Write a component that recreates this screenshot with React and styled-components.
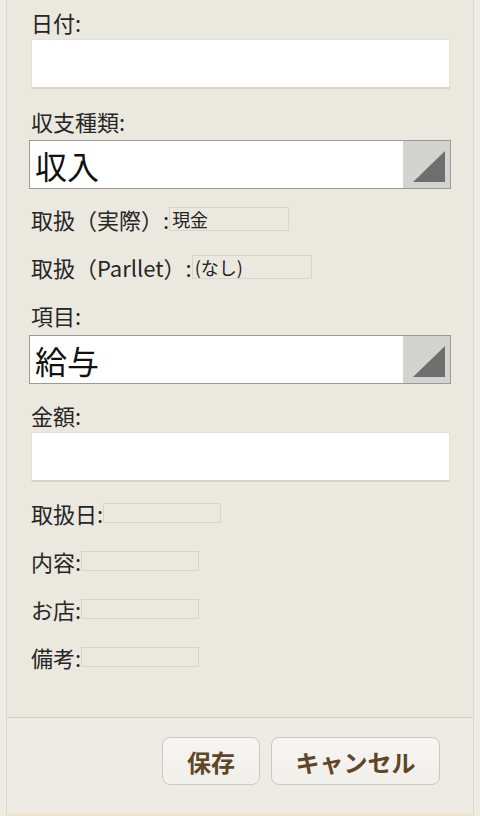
import styled, { createGlobalStyle } from "styled-components";

const Global = createGlobalStyle`
  html, body {
    margin: 0;
    padding: 0;
    background: #eeece5;
  }
  body {
    font-family: "Noto Sans CJK JP", "Noto Sans", sans-serif;
    color: #262626;
  }
`;

const Page = styled.div`
  width: 480px;
  height: 816px;
  display: flex;
  padding: 0 6px;
  box-sizing: border-box;
`;

const Frame = styled.div`
  flex: 1;
  display: flex;
  flex-direction: column;
  background: #ebe8df;
  border-left: 1px solid #dcd9d0;
  border-right: 1px solid #dcd9d0;
  border-bottom: 3px solid #efe5c9;
`;

const Form = styled.div`
  flex: 1;
  padding: 9px 24px 0 24px;
  display: flex;
  flex-direction: column;
`;

const Label = styled.div`
  font-size: 22px;
  line-height: 26px;
  height: 26px;
  margin-top: ${(p) => p.$top || 0}px;
`;

const TextBox = styled.div`
  height: 50px;
  margin-top: ${(p) => p.$top || 0}px;
  margin-right: -1px;
  background: #fff;
  box-sizing: border-box;
  border: 1px solid #e4e1d8;
  border-bottom: 2px solid #d6d3ca;
`;

const Select = styled.div`
  height: 49px;
  margin-top: ${(p) => p.$top || 0}px;
  margin-left: -2px;
  margin-right: -2px;
  display: flex;
  box-sizing: border-box;
  border: 1px solid #9b9a93;
  background: #fff;
`;

const SelectText = styled.div`
  flex: 1;
  display: flex;
  align-items: center;
  padding-left: 5px;
  font-size: 32px;
  color: #111;
`;

const Arrow = styled.div`
  width: 47px;
  background: #d3d3d1;
  display: flex;
  align-items: flex-end;
  justify-content: flex-end;
  padding: 0 5px 6px 0;
  box-sizing: border-box;
`;

const Row = styled.div`
  display: flex;
  align-items: center;
  height: 26px;
  margin-top: ${(p) => p.$top || 0}px;
  font-size: 22px;
`;

const Field = styled.div`
  width: ${(p) => p.$w}px;
  height: ${(p) => p.$h}px;
  box-sizing: border-box;
  border: 1px solid #d8d5cc;
  background: #ebe8e0;
  font-size: 18px;
  line-height: ${(p) => p.$h - 2}px;
  padding-left: 2px;
  color: #222;
`;

const Footer = styled.div`
  height: 96px;
  border-top: 1px solid #d3d0c7;
  background: #edebe3;
  display: flex;
  justify-content: flex-end;
  align-items: flex-start;
  gap: 11px;
  padding: 19px 33px 0 0;
  box-sizing: border-box;
`;

const Button = styled.button`
  width: ${(p) => p.$w}px;
  height: 48px;
  border: 1px solid #ccc9c0;
  border-radius: 8px;
  background: linear-gradient(#f6f5f2, #f0efea);
  font-family: "Noto Sans CJK JP", sans-serif;
  font-weight: 700;
  font-size: 24px;
  color: #5e4626;
  padding: 0;
  cursor: pointer;
`;

const Triangle = () => (
  <svg width="32" height="31" viewBox="0 0 32 31">
    <polygon points="0,31 32,31 32,0" fill="#6e6e6e" />
  </svg>
);

const App = () => {
  return (
    <Page>
      <Global />
      <Frame>
        <Form>
          <Label>日付:</Label>
          <TextBox $top={4} />
          <Label $top={19}>収支種類:</Label>
          <Select $top={6}>
            <SelectText>収入</SelectText>
            <Arrow>
              <Triangle />
            </Arrow>
          </Select>
          <Row $top={17}>
            取扱（実際）:<Field $w={120} $h={24}>現金</Field>
          </Row>
          <Row $top={22}>
            取扱（Parllet）:<Field $w={120} $h={24}>(なし)</Field>
          </Row>
          <Label $top={22}>項目:</Label>
          <Select $top={7}>
            <SelectText>給与</SelectText>
            <Arrow>
              <Triangle />
            </Arrow>
          </Select>
          <Label $top={18}>金額:</Label>
          <TextBox $top={4} />
          <Row $top={18}>
            取扱日:<Field $w={118} $h={20} />
          </Row>
          <Row $top={22}>
            内容:<Field $w={118} $h={20} />
          </Row>
          <Row $top={22}>
            お店:<Field $w={118} $h={20} />
          </Row>
          <Row $top={22}>
            備考:<Field $w={118} $h={20} />
          </Row>
        </Form>
        <Footer>
          <Button $w={98}>保存</Button>
          <Button $w={169}>キャンセル</Button>
        </Footer>
      </Frame>
    </Page>
  );
};

export default App;
